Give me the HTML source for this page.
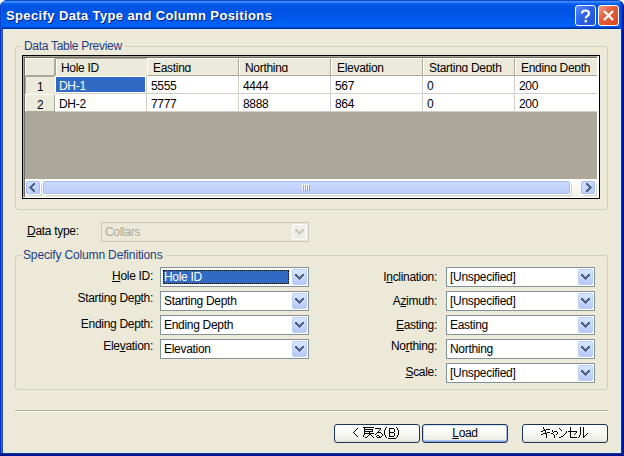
<!DOCTYPE html>
<html><head><meta charset="utf-8">
<style>
*{margin:0;padding:0;box-sizing:border-box}
html,body{width:624px;height:456px;overflow:hidden;background:#fff}
body{position:relative;font-family:"Liberation Sans",sans-serif;font-size:12px;color:#000}
.a{position:absolute}
.t{position:absolute;white-space:pre;line-height:14px;letter-spacing:-0.3px}
#frame{left:0;top:0;width:624px;height:456px;background:#0019A0;border-radius:8px 8px 0 0}
#lb{left:0;top:24px;width:3px;height:432px;background:linear-gradient(90deg,#0033CC 0,#0033CC 1px,#2D5FD8 1px,#2D5FD8 2px,#2850A0 2px)}
#rb{left:621px;top:24px;width:3px;height:432px;background:linear-gradient(90deg,#1A3080 0,#1A3080 1px,#001899 1px,#001899 2px,#00138C 2px)}
#bb{left:0;top:453px;width:624px;height:3px;background:linear-gradient(180deg,#1A3080 0,#1A3080 1px,#001899 1px,#001899 2px,#00138C 2px)}
#title{left:0;top:0;width:624px;height:29px;border-radius:7px 7px 0 0;background:linear-gradient(180deg,#0A48D0 0px,#0A48D0 1px,#3D8BFF 1px,#3D8BFF 2px,#2E7EFA 2px,#2E7EFA 3px,#0C66F2 3px,#0C66F2 4px,#005CEC 4px,#005CEC 5px,#0058E8 5px,#0058E8 6px,#0054E4 6px,#0054E4 7px,#0054E4 7px,#0054E4 8px,#0054E4 8px,#0054E4 9px,#0054E4 9px,#0054E4 10px,#0054E4 10px,#0054E4 11px,#0054E4 11px,#0054E4 12px,#0054E4 12px,#0054E4 13px,#0057E8 13px,#0057E8 14px,#0057E8 14px,#0057E8 15px,#0057E8 15px,#0057E8 16px,#0057E8 16px,#0057E8 17px,#0057E8 17px,#0057E8 18px,#0057E8 18px,#0057E8 19px,#005EF2 19px,#005EF2 20px,#005EF2 20px,#005EF2 21px,#005EF2 21px,#005EF2 22px,#005EF2 22px,#005EF2 23px,#005EF2 23px,#005EF2 24px,#0062F8 24px,#0062F8 25px,#0062F8 25px,#0062F8 26px,#005AEE 26px,#005AEE 27px,#0044C8 27px,#0044C8 28px,#002E98 28px,#002E98 29px)}
#client{left:3px;top:29px;width:618px;height:424px;background:#DDF0FF}
#clientin{left:4px;top:30px;width:616px;height:422px;background:#ECE9D8}
#ttext{left:6px;top:9px;font-weight:bold;font-size:13px;color:#fff;letter-spacing:0.38px;text-shadow:1px 1px 0 #0A1F7A;line-height:14px}
.cbtn{width:21px;height:21px;border:1px solid #fff;border-radius:3px}
.grp{border:1px solid #D0D0BF;border-radius:3px}
.cap{color:#1E3C80;background:#ECE9D8;padding:0 3px 0 2px}
.grid{background:#ACA899}
.hc{position:absolute;top:58px;height:18px;background:#EBEADB;border-top:1px solid #fff;border-left:1px solid #fff;border-right:1px solid #ACA899;border-bottom:1px solid #ACA899;overflow:hidden}
.hc span{position:absolute;left:5px;top:2px;height:11px;overflow:hidden;white-space:pre;letter-spacing:-0.3px;line-height:14px}
.cell{position:absolute;height:18px;background:#fff;border-right:1px solid #D4D0C8;border-bottom:1px solid #D4D0C8;overflow:hidden}
.cell span{position:absolute;left:4px;top:3px;white-space:pre;letter-spacing:-0.3px;line-height:14px}
.combo{position:absolute;height:20px;background:#fff;border:1px solid #83939A}
.combo span{position:absolute;left:3px;top:2px;white-space:pre;letter-spacing:-0.3px;line-height:14px}
.dd{position:absolute;right:1px;top:1px;width:15px;height:16px;border-radius:2px;background:linear-gradient(180deg,#D8E5FE 0%,#C6D7FC 50%,#B4C8F6 100%);border:1px solid #BCCDF5}
.dd svg{position:absolute;left:2px;top:4px}
.lbl{position:absolute;white-space:pre;letter-spacing:-0.3px;line-height:14px;text-align:right}
.btn{position:absolute;top:424px;height:19px;border:1px solid #1B3556;border-radius:3px;background:linear-gradient(180deg,#FFFFFF 0%,#FAFAF7 40%,#F1F0EA 80%,#E2E0D6 100%)}
.btn span{position:absolute;left:0;right:0;top:1px;text-align:center;white-space:pre;letter-spacing:-0.3px;line-height:14px}
.sbb{top:181px;height:13px;border:1px solid #A9BDEA;border-radius:2px;background:linear-gradient(135deg,#D3DFFD 0%,#C6D5FB 50%,#B8CBF7 100%);box-shadow:1px 1px 0 0 #FFFFFF,2px 2px 0 0 #CFD2C6}
</style></head><body>
<div id="frame" class="a"></div>
<div id="lb" class="a"></div>
<div id="rb" class="a"></div>
<div id="bb" class="a"></div>
<div id="title" class="a" style="overflow:hidden"><div class="a" style="left:0;top:0;width:2px;height:29px;background:linear-gradient(90deg,#0A3FCB 0,#0A3FCB 1px,#1D5EE8 1px)"></div><div class="a" style="left:620px;top:0;width:4px;height:29px;background:linear-gradient(90deg,#0050DC 0,#0050DC 1px,#0A3CC8 1px,#0A3CC8 2px,#0028B0 2px,#0028B0 3px,#001A98 3px)"></div></div>
<div id="client" class="a"></div>
<div id="clientin" class="a"></div>
<div id="ttext" class="t">Specify Data Type and Column Positions</div>

<!-- help button -->
<div class="a cbtn" style="left:575px;top:5px;background:linear-gradient(135deg,#5A8CF8 0%,#2E62E8 45%,#1F50D8 100%)">
<svg class="a" style="left:0;top:0" width="19" height="19" viewBox="0 0 19 19"><path d="M6 7.5 Q6 4.5 9.5 4.5 Q13 4.5 13 7.5 Q13 9.3 11 10.2 Q9.8 10.8 9.8 12.5" fill="none" stroke="#fff" stroke-width="2.2"/><rect x="8.6" y="14" width="2.4" height="2.4" fill="#fff"/></svg>
</div>
<!-- close button -->
<div class="a cbtn" style="left:598px;top:5px;background:linear-gradient(135deg,#F0A088 0%,#E26040 40%,#D84818 100%)">
<svg class="a" style="left:0;top:0" width="19" height="19" viewBox="0 0 19 19"><path d="M5 5 L14 14 M14 5 L5 14" stroke="#fff" stroke-width="2.4"/></svg>
</div>

<!-- group box 1 -->
<div class="a grp" style="left:15px;top:46px;width:593px;height:164px"></div>
<div class="t cap" style="left:22px;top:39px">Data Table Preview</div>

<!-- grid -->
<div class="a" style="left:22px;top:55px;width:578px;height:144px;background:#000"></div>
<div class="a" style="left:23px;top:56px;width:576px;height:142px;background:#fff"></div>
<div class="a" style="left:23px;top:56px;width:574px;height:141px;background:#ACA899"></div>
<div class="a" style="left:24px;top:57px;width:573px;height:140px;background:#716F64"></div>
<div class="a grid" style="left:25px;top:58px;width:572px;height:139px"></div>

<div class="a" style="left:25px;top:58px;width:572px;height:121px;overflow:hidden">
  <!-- header row -->
  <div class="hc" style="left:0;top:0;width:30px"></div>
  <div class="hc" style="left:30px;top:0;width:92px;border-top-color:#ACA899;border-left-color:#ACA899;border-right-color:#EBEADB;border-bottom-color:#EBEADB;box-shadow:inset 1px 0 0 #fff"><span>Hole ID</span></div>
  <div class="hc" style="left:122px;top:0;width:92px"><span>Easting</span></div>
  <div class="hc" style="left:214px;top:0;width:92px"><span>Northing</span></div>
  <div class="hc" style="left:306px;top:0;width:92px"><span>Elevation</span></div>
  <div class="hc" style="left:398px;top:0;width:92px"><span>Starting Depth</span></div>
  <div class="hc" style="left:490px;top:0;width:92px"><span>Ending Depth</span></div>
  <!-- row headers -->
  <div class="hc" style="left:0;top:18px;width:30px;border-top-color:#ACA899;border-left-color:#ACA899;border-right-color:#EBEADB;border-bottom-color:#EBEADB"><span style="left:11px;top:3px;height:14px">1</span></div>
  <div class="hc" style="left:0;top:36px;width:30px"><span style="left:11px;top:3px;height:12px">2</span></div>
  <!-- row 1 -->
  <div class="cell" style="left:30px;top:18px;width:92px"><div class="a" style="left:1px;top:1px;width:89px;height:15px;background:#316AC5"></div><span style="color:#fff">DH-1</span></div>
  <div class="cell" style="left:122px;top:18px;width:92px"><span>5555</span></div>
  <div class="cell" style="left:214px;top:18px;width:92px"><span>4444</span></div>
  <div class="cell" style="left:306px;top:18px;width:92px"><span>567</span></div>
  <div class="cell" style="left:398px;top:18px;width:92px"><span>0</span></div>
  <div class="cell" style="left:490px;top:18px;width:92px"><span>200</span></div>
  <!-- row 2 -->
  <div class="cell" style="left:30px;top:36px;width:92px"><span>DH-2</span></div>
  <div class="cell" style="left:122px;top:36px;width:92px"><span>7777</span></div>
  <div class="cell" style="left:214px;top:36px;width:92px"><span>8888</span></div>
  <div class="cell" style="left:306px;top:36px;width:92px"><span>864</span></div>
  <div class="cell" style="left:398px;top:36px;width:92px"><span>0</span></div>
  <div class="cell" style="left:490px;top:36px;width:92px"><span>200</span></div>
</div>

<!-- horizontal scrollbar -->
<div class="a" style="left:25px;top:179px;width:572px;height:18px;background:linear-gradient(180deg,#FEFEFC 0%,#F6F5F0 60%,#F0EEE6 100%)"></div>
<div class="a sbb" style="left:26px;width:14px"></div>
<svg class="a" style="left:29px;top:183px" width="6" height="9" shape-rendering="crispEdges"><path d="M4 0h2v1h-2zM3 1h3v1h-3zM2 2h3v1h-3zM1 3h3v1h-3zM0 4h3v1h-3zM1 5h3v1h-3zM2 6h3v1h-3zM3 7h3v1h-3zM4 8h2v1h-2z" fill="#4D6185"/></svg>
<div class="a sbb" style="left:43px;width:527px;background:linear-gradient(180deg,#CAD9FC 0%,#C2D3FB 50%,#B9CCF8 100%)"></div>
<div class="a" style="left:302px;top:184px;width:1px;height:6px;background:#FFFFFF"></div><div class="a" style="left:303px;top:185px;width:1px;height:6px;background:#8DA6E3"></div><div class="a" style="left:304px;top:184px;width:1px;height:6px;background:#FFFFFF"></div><div class="a" style="left:305px;top:185px;width:1px;height:6px;background:#8DA6E3"></div><div class="a" style="left:306px;top:184px;width:1px;height:6px;background:#FFFFFF"></div><div class="a" style="left:307px;top:185px;width:1px;height:6px;background:#8DA6E3"></div><div class="a" style="left:308px;top:184px;width:1px;height:6px;background:#FFFFFF"></div><div class="a" style="left:309px;top:185px;width:1px;height:6px;background:#8DA6E3"></div>
<div class="a sbb" style="left:581px;width:14px"></div>
<svg class="a" style="left:586px;top:183px" width="6" height="9" shape-rendering="crispEdges"><path d="M0 0h2v1h-2zM0 1h3v1h-3zM1 2h3v1h-3zM2 3h3v1h-3zM3 4h3v1h-3zM2 5h3v1h-3zM1 6h3v1h-3zM0 7h3v1h-3zM0 8h2v1h-2z" fill="#4D6185"/></svg>

<!-- data type -->
<div class="lbl" style="left:27px;top:224px"><u>D</u>ata type:</div>
<div class="combo" style="left:101px;top:222px;width:208px;height:20px;border-color:#C9C7BA;background:#ECE9D8"><span style="color:#ACA899">Collars</span>
  <div class="dd" style="right:1px;top:1px;width:15px;height:16px;background:#EFEEE6;border-color:#FFFFFF"><svg width="9" height="6" viewBox="0 0 9 6" shape-rendering="crispEdges"><path d="M0 0h2v1h-2zM7 0h2v1h-2zM0 1h3v1h-3zM6 1h3v1h-3zM1 2h3v1h-3zM5 2h3v1h-3zM2 3h5v1h-5zM3 4h3v1h-3zM4 5h1v1h-1z" fill="#C9C7BA"/></svg></div>
</div>

<!-- group box 2 -->
<div class="a grp" style="left:15px;top:255px;width:593px;height:135px"></div>
<div class="t cap" style="left:22px;top:248px;padding-left:1px;letter-spacing:-0.15px">Specify Column Definitions</div>

<!-- left labels -->
<div class="lbl" style="left:0;width:153px;top:269px"><u>H</u>ole ID:</div>
<div class="lbl" style="left:0;width:153px;top:291px">Starting De<u>p</u>th:</div>
<div class="lbl" style="left:0;width:153px;top:317px">Endin<u>g</u> Depth:</div>
<div class="lbl" style="left:0;width:153px;top:339px">Ele<u>v</u>ation:</div>
<!-- left combos -->
<div class="combo" style="left:160px;top:267px;width:149px"><div class="a" style="left:2px;top:2px;width:126px;height:14px;background:#316AC5;border:1px dotted #000"></div><span style="color:#fff">Hole ID</span><div class="dd"><svg width="9" height="6" viewBox="0 0 9 6" shape-rendering="crispEdges"><path d="M0 0h2v1h-2zM7 0h2v1h-2zM0 1h3v1h-3zM6 1h3v1h-3zM1 2h3v1h-3zM5 2h3v1h-3zM2 3h5v1h-5zM3 4h3v1h-3zM4 5h1v1h-1z" fill="#4D6185"/></svg></div></div>
<div class="combo" style="left:160px;top:291px;width:149px"><span>Starting Depth</span><div class="dd"><svg width="9" height="6" viewBox="0 0 9 6" shape-rendering="crispEdges"><path d="M0 0h2v1h-2zM7 0h2v1h-2zM0 1h3v1h-3zM6 1h3v1h-3zM1 2h3v1h-3zM5 2h3v1h-3zM2 3h5v1h-5zM3 4h3v1h-3zM4 5h1v1h-1z" fill="#4D6185"/></svg></div></div>
<div class="combo" style="left:160px;top:315px;width:149px"><span>Ending Depth</span><div class="dd"><svg width="9" height="6" viewBox="0 0 9 6" shape-rendering="crispEdges"><path d="M0 0h2v1h-2zM7 0h2v1h-2zM0 1h3v1h-3zM6 1h3v1h-3zM1 2h3v1h-3zM5 2h3v1h-3zM2 3h5v1h-5zM3 4h3v1h-3zM4 5h1v1h-1z" fill="#4D6185"/></svg></div></div>
<div class="combo" style="left:160px;top:339px;width:149px"><span>Elevation</span><div class="dd"><svg width="9" height="6" viewBox="0 0 9 6" shape-rendering="crispEdges"><path d="M0 0h2v1h-2zM7 0h2v1h-2zM0 1h3v1h-3zM6 1h3v1h-3zM1 2h3v1h-3zM5 2h3v1h-3zM2 3h5v1h-5zM3 4h3v1h-3zM4 5h1v1h-1z" fill="#4D6185"/></svg></div></div>

<!-- right labels -->
<div class="lbl" style="left:300px;width:137px;top:270px">I<u>n</u>clination:</div>
<div class="lbl" style="left:300px;width:137px;top:294px">A<u>z</u>imuth:</div>
<div class="lbl" style="left:300px;width:137px;top:318px"><u>E</u>asting:</div>
<div class="lbl" style="left:300px;width:137px;top:339px">No<u>r</u>thing:</div>
<div class="lbl" style="left:300px;width:137px;top:365px"><u>S</u>cale:</div>
<!-- right combos -->
<div class="combo" style="left:446px;top:267px;width:149px"><span>[Unspecified]</span><div class="dd"><svg width="9" height="6" viewBox="0 0 9 6" shape-rendering="crispEdges"><path d="M0 0h2v1h-2zM7 0h2v1h-2zM0 1h3v1h-3zM6 1h3v1h-3zM1 2h3v1h-3zM5 2h3v1h-3zM2 3h5v1h-5zM3 4h3v1h-3zM4 5h1v1h-1z" fill="#4D6185"/></svg></div></div>
<div class="combo" style="left:446px;top:291px;width:149px"><span>[Unspecified]</span><div class="dd"><svg width="9" height="6" viewBox="0 0 9 6" shape-rendering="crispEdges"><path d="M0 0h2v1h-2zM7 0h2v1h-2zM0 1h3v1h-3zM6 1h3v1h-3zM1 2h3v1h-3zM5 2h3v1h-3zM2 3h5v1h-5zM3 4h3v1h-3zM4 5h1v1h-1z" fill="#4D6185"/></svg></div></div>
<div class="combo" style="left:446px;top:315px;width:149px"><span>Easting</span><div class="dd"><svg width="9" height="6" viewBox="0 0 9 6" shape-rendering="crispEdges"><path d="M0 0h2v1h-2zM7 0h2v1h-2zM0 1h3v1h-3zM6 1h3v1h-3zM1 2h3v1h-3zM5 2h3v1h-3zM2 3h5v1h-5zM3 4h3v1h-3zM4 5h1v1h-1z" fill="#4D6185"/></svg></div></div>
<div class="combo" style="left:446px;top:339px;width:149px"><span>Northing</span><div class="dd"><svg width="9" height="6" viewBox="0 0 9 6" shape-rendering="crispEdges"><path d="M0 0h2v1h-2zM7 0h2v1h-2zM0 1h3v1h-3zM6 1h3v1h-3zM1 2h3v1h-3zM5 2h3v1h-3zM2 3h5v1h-5zM3 4h3v1h-3zM4 5h1v1h-1z" fill="#4D6185"/></svg></div></div>
<div class="combo" style="left:446px;top:363px;width:149px"><span>[Unspecified]</span><div class="dd"><svg width="9" height="6" viewBox="0 0 9 6" shape-rendering="crispEdges"><path d="M0 0h2v1h-2zM7 0h2v1h-2zM0 1h3v1h-3zM6 1h3v1h-3zM1 2h3v1h-3zM5 2h3v1h-3zM2 3h5v1h-5zM3 4h3v1h-3zM4 5h1v1h-1z" fill="#4D6185"/></svg></div></div>

<!-- separator -->
<div class="a" style="left:15px;top:410px;width:593px;height:1px;background:#ACA899"></div>
<div class="a" style="left:15px;top:411px;width:593px;height:1px;background:#FFFFFF"></div>

<!-- buttons -->
<div class="btn" style="left:334px;width:86px"></div>
<svg class="a" style="left:353px;top:427px" width="46" height="12" shape-rendering="crispEdges"><path d="M10 0h11v1h-11zM33 0h1v1h-1zM43 0h1v1h-1zM4 1h1v1h-1zM11 1h1v1h-1zM22 1h6v1h-6zM32 1h1v1h-1zM36 1h5v1h-5zM44 1h1v1h-1zM3 2h1v1h-1zM11 2h9v1h-9zM27 2h1v1h-1zM32 2h1v1h-1zM36 2h1v1h-1zM41 2h1v1h-1zM44 2h1v1h-1zM2 3h1v1h-1zM11 3h1v1h-1zM19 3h1v1h-1zM26 3h1v1h-1zM31 3h1v1h-1zM36 3h1v1h-1zM41 3h1v1h-1zM45 3h1v1h-1zM1 4h1v1h-1zM11 4h9v1h-9zM25 4h1v1h-1zM31 4h1v1h-1zM36 4h1v1h-1zM41 4h1v1h-1zM45 4h1v1h-1zM0 5h1v1h-1zM11 5h1v1h-1zM16 5h1v1h-1zM24 5h4v1h-4zM31 5h1v1h-1zM36 5h5v1h-5zM45 5h1v1h-1zM1 6h1v1h-1zM11 6h10v1h-10zM23 6h1v1h-1zM28 6h1v1h-1zM31 6h1v1h-1zM36 6h1v1h-1zM41 6h1v1h-1zM45 6h1v1h-1zM2 7h1v1h-1zM11 7h1v1h-1zM16 7h2v1h-2zM22 7h1v1h-1zM29 7h1v1h-1zM31 7h1v1h-1zM36 7h1v1h-1zM41 7h1v1h-1zM45 7h1v1h-1zM3 8h1v1h-1zM10 8h1v1h-1zM15 8h1v1h-1zM18 8h1v1h-1zM24 8h2v1h-2zM29 8h1v1h-1zM32 8h1v1h-1zM36 8h1v1h-1zM41 8h1v1h-1zM44 8h1v1h-1zM4 9h1v1h-1zM10 9h1v1h-1zM14 9h1v1h-1zM19 9h1v1h-1zM23 9h1v1h-1zM26 9h1v1h-1zM28 9h1v1h-1zM32 9h1v1h-1zM36 9h5v1h-5zM44 9h1v1h-1zM12 10h2v1h-2zM20 10h1v1h-1zM24 10h4v1h-4zM33 10h1v1h-1zM43 10h1v1h-1zM35 11h8v1h-8z" fill="#000"/></svg>
<div class="btn" style="left:422px;width:86px;box-shadow:inset 0 -1px 0 #86A4E4,inset 0 1px 0 #CEE2FC,inset 1px 0 0 #C0D5F8,inset -1px 0 0 #A4BDEE,inset 0 -2px 0 #B2C7F2"><span><u>L</u>oad</span></div>
<div class="btn" style="left:522px;width:86px"></div>
<svg class="a" style="left:541px;top:427px" width="47" height="11" shape-rendering="crispEdges"><path d="M2 0h1v1h-1zM29 0h1v1h-1zM39 0h1v1h-1zM42 0h1v1h-1zM2 1h1v1h-1zM18 1h1v1h-1zM29 1h1v1h-1zM39 1h1v1h-1zM42 1h1v1h-1zM3 2h1v1h-1zM5 2h4v1h-4zM19 2h1v1h-1zM29 2h1v1h-1zM39 2h1v1h-1zM42 2h1v1h-1zM2 3h3v1h-3zM11 3h1v1h-1zM20 3h1v1h-1zM29 3h1v1h-1zM39 3h1v1h-1zM42 3h1v1h-1zM0 4h2v1h-2zM4 4h1v1h-1zM11 4h1v1h-1zM13 4h3v1h-3zM25 4h1v1h-1zM27 4h9v1h-9zM39 4h1v1h-1zM42 4h1v1h-1zM4 5h1v1h-1zM6 5h3v1h-3zM12 5h1v1h-1zM16 5h1v1h-1zM25 5h1v1h-1zM29 5h1v1h-1zM35 5h1v1h-1zM39 5h1v1h-1zM42 5h1v1h-1zM2 6h4v1h-4zM10 6h2v1h-2zM16 6h1v1h-1zM24 6h1v1h-1zM29 6h1v1h-1zM34 6h1v1h-1zM39 6h1v1h-1zM42 6h1v1h-1zM46 6h1v1h-1zM0 7h2v1h-2zM5 7h1v1h-1zM12 7h1v1h-1zM15 7h1v1h-1zM23 7h1v1h-1zM29 7h1v1h-1zM33 7h1v1h-1zM39 7h1v1h-1zM42 7h1v1h-1zM45 7h1v1h-1zM5 8h1v1h-1zM13 8h1v1h-1zM22 8h1v1h-1zM29 8h1v1h-1zM38 8h1v1h-1zM42 8h1v1h-1zM44 8h1v1h-1zM5 9h1v1h-1zM13 9h1v1h-1zM20 9h2v1h-2zM29 9h1v1h-1zM38 9h1v1h-1zM42 9h2v1h-2zM5 10h1v1h-1zM13 10h1v1h-1zM18 10h2v1h-2zM29 10h7v1h-7zM37 10h1v1h-1zM42 10h1v1h-1z" fill="#000"/></svg>
</body></html>
